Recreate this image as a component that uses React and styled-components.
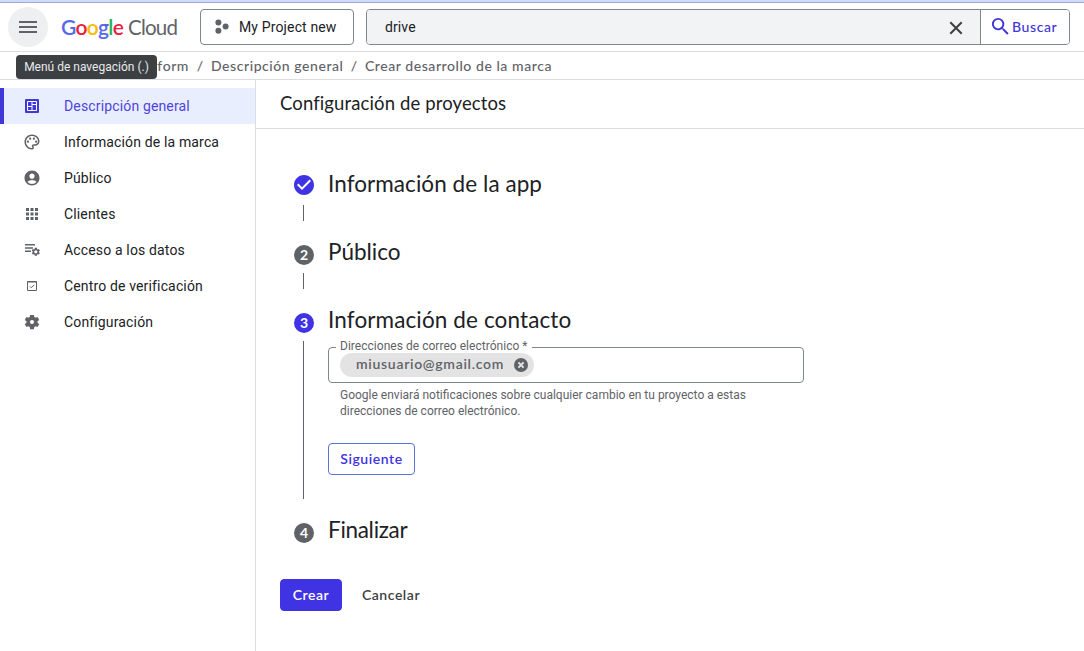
import React from 'react';
import styled, { createGlobalStyle } from 'styled-components';
import {
  MdAccountCircle,
  MdApps,
  MdCheckCircle,
  MdOutlinePalette,
  MdSearch,
} from 'react-icons/md';

const GlobalStyle = createGlobalStyle`
  * { box-sizing: border-box; }
  body {
    margin: 0;
    background: #fff;
    color: #202124;
    font-family: Roboto, "Liberation Sans", sans-serif;
    font-size: 14px;
    overflow: hidden;
  }
  button { font: inherit; cursor: pointer; }
  svg { display: block; flex: none; }
`;

const display = 'Lato, "Open Sans", sans-serif';

const Page = styled.div`
  display: flex;
  flex-direction: column;
  height: 651px;
`;

const TopStrip = styled.div`
  flex: none;
  height: 3px;
  background: #d0dafc;
  border-bottom: 1px solid #9fabd0;
`;

const Header = styled.header`
  flex: none;
  display: flex;
  align-items: center;
  height: 49px;
  padding: 0 14px 0 8px;
  border-bottom: 1px solid #dadce0;
`;

const MenuButton = styled.button`
  position: relative;
  display: flex;
  align-items: center;
  justify-content: center;
  width: 40px;
  height: 40px;
  padding: 0;
  border: 0;
  border-radius: 50%;
  background: #eeeff1;
`;

const Tooltip = styled.span`
  position: absolute;
  z-index: 2;
  top: 48px;
  left: 8px;
  width: 141px;
  height: 24px;
  border-radius: 4px;
  background: #3c4043;
  color: #e8eaed;
  font-size: 12px;
  line-height: 24px;
  text-align: center;
  white-space: nowrap;
`;

const Logo = styled.div`
  display: flex;
  width: 139px;
  padding-left: 13px;
  font-family: ${display};
  font-size: 21px;
  line-height: 26px;
  white-space: nowrap;
`;

const Brand = styled.span`
  width: 67px;
  font-weight: 600;
  letter-spacing: -0.7px;
`;

const Letter = styled.span`
  color: ${(p) => p.$color};
`;

const Product = styled.span`
  color: #5f6368;
  font-size: 20.5px;
  letter-spacing: -0.8px;
`;

const ProjectPicker = styled.button`
  display: flex;
  align-items: center;
  gap: 10px;
  width: 154px;
  height: 36px;
  margin: 0 12px 0 13px;
  padding: 0 0 0 14px;
  border: 1px solid #80868b;
  border-radius: 4px;
  background: #fff;
  color: #202124;
  letter-spacing: 0.14px;
  white-space: nowrap;
`;

const SearchBox = styled.div`
  flex: 1;
  display: flex;
  height: 36px;
  border: 1px solid #80868b;
  border-radius: 4px;
  overflow: hidden;
`;

const SearchField = styled.div`
  flex: 1;
  display: flex;
  align-items: center;
  justify-content: space-between;
  padding: 0 14px 0 18px;
  background: #f1f3f4;
  letter-spacing: 0.1px;
`;

const SearchButton = styled.button`
  display: flex;
  align-items: center;
  width: 89px;
  padding: 0 0 2px 8px;
  border: 0;
  border-left: 1px solid #80868b;
  background: #fff;
  color: #4035d8;
  font-family: ${display};
  font-weight: 500;
  letter-spacing: 0.6px;
`;

const Breadcrumbs = styled.nav`
  flex: none;
  display: flex;
  align-items: center;
  height: 28px;
  padding-left: 36px;
  border-bottom: 1px solid #dadce0;
  color: #5f6368;
  font-family: ${display};
  font-weight: 500;
  white-space: nowrap;
`;

const Crumb = styled.span`
  width: ${(p) => p.$width}px;
  text-align: ${(p) => p.$align || 'left'};
  letter-spacing: 0.56px;
`;

const Slash = styled.span`
  width: 22px;
  text-align: center;
`;

const Body = styled.div`
  flex: 1;
  display: flex;
`;

const Sidebar = styled.aside`
  width: 256px;
  padding-top: 8px;
  border-right: 1px solid #dadce0;
`;

const NavItem = styled.div`
  display: flex;
  align-items: center;
  gap: 23px;
  height: 36px;
  padding-left: 19px;
  border-left: 4px solid ${(p) => (p.$active ? '#4038d8' : 'transparent')};
  background: ${(p) => (p.$active ? '#e8eefe' : 'transparent')};
  color: ${(p) => (p.$active ? '#4f45dc' : '#202124')};
  letter-spacing: 0.15px;

  svg {
    color: ${(p) => (p.$active ? '#4038d8' : '#5f6368')};
  }
`;

const Main = styled.main`
  flex: 1;
`;

const PageTitle = styled.h1`
  height: 49px;
  margin: 0;
  padding-left: 24px;
  border-bottom: 1px solid #dadce0;
  font-family: ${display};
  font-size: 18.5px;
  font-weight: 400;
  letter-spacing: 0.12px;
  line-height: 46px;
`;

const Steps = styled.div`
  display: flex;
  flex-direction: column;
  gap: 12px;
  padding: 36px 0 0 38px;
`;

const StepHeader = styled.div`
  display: flex;
  align-items: center;
  gap: 14px;
  height: 40px;
`;

const StepMark = styled.span`
  display: flex;
  align-items: center;
  justify-content: center;
  width: 20px;
  height: 20px;
  margin-top: ${(p) => (p.$done ? 0 : 4)}px;
  border-radius: 50%;
  background: ${(p) => (p.$done ? 'none' : p.$active ? '#4033e3' : '#5f6368')};
  color: ${(p) => (p.$done ? '#4033e3' : '#fff')};
  font-family: ${display};
  font-size: 14px;
  font-weight: 700;
  line-height: 20px;
`;

const StepTitle = styled.h2`
  margin: 0 0 2px;
  font-family: ${display};
  font-size: 22.5px;
  font-weight: 400;
  letter-spacing: ${(p) => p.$spacing || 0}px;
  line-height: 28px;
`;

const StepBody = styled.div`
  min-height: 16px;
  margin-left: 9px;
  padding-left: 24px;
  border-left: 1px solid #5f6368;
`;

const ContactForm = styled.div`
  height: 158px;
  padding-top: 6px;
`;

const EmailField = styled.div`
  position: relative;
  display: flex;
  align-items: center;
  width: 476px;
  height: 36px;
  padding-left: 11px;
  border: 1px solid #80868b;
  border-radius: 4px;
`;

const FieldLabel = styled.label`
  position: absolute;
  top: -10px;
  left: 7px;
  width: 196px;
  padding-left: 4px;
  background: #fff;
  color: #5f6368;
  font-size: 12px;
  letter-spacing: 0.03px;
  line-height: 16px;
  white-space: nowrap;
`;

const Chip = styled.span`
  position: relative;
  display: flex;
  align-items: center;
  justify-content: space-between;
  width: 194px;
  height: 24px;
  padding: 0 5px 0 16px;
  border-radius: 12px;
  background: #e3e3e3;
  color: #5f6368;
  font-family: ${display};
  font-weight: 600;
  letter-spacing: 0.7px;
  line-height: 20px;
`;

const ChipText = styled.span`
  padding-bottom: 2px;
`;

const Hint = styled.p`
  width: 430px;
  margin: 4px 0 24px;
  padding-left: 12px;
  color: #5f6368;
  font-size: 12px;
  line-height: 16px;
`;

const Button = styled.button`
  width: ${(p) => p.$width}px;
  height: 32px;
  padding: 0 0 2px;
  border: 1px solid ${(p) => (p.$primary ? '#4033e3' : p.$outlined ? '#5b72d8' : 'transparent')};
  border-radius: 4px;
  background: ${(p) => (p.$primary ? '#4033e3' : 'transparent')};
  color: ${(p) => (p.$primary ? '#fff' : p.$outlined ? '#4033e3' : '#3c4043')};
  font-family: ${display};
  font-weight: 600;
  letter-spacing: 0.55px;
`;

const Actions = styled.div`
  display: flex;
  gap: 8px;
  padding: 28px 0 0 24px;
`;

const MenuIcon = () => (
  <svg width="18" height="14" viewBox="0 0 18 14" fill="#5f6368">
    <path d="M0 1h18v2H0zM0 6h18v2H0zM0 11h18v2H0z" />
  </svg>
);

const ProjectIcon = () => (
  <svg width="14" height="16" viewBox="0 0 14 16" fill="#5f6368">
    <circle cx="3.4" cy="3.4" r="3" />
    <circle cx="10.6" cy="7.6" r="3" />
    <circle cx="3.4" cy="11.8" r="3" />
  </svg>
);

const ClearIcon = () => (
  <svg width="20" height="20" viewBox="0 0 20 20" fill="none" stroke="#3c4043" strokeWidth="2">
    <path d="M4.3 5.3l11.4 11.4M15.7 5.3L4.3 16.7" />
  </svg>
);

const RemoveIcon = () => (
  <svg width="16" height="16" viewBox="0 0 16 16">
    <circle cx="8" cy="8" r="7" fill="currentColor" />
    <path d="M5.4 5.4l5.2 5.2M10.6 5.4l-5.2 5.2" stroke="#e3e3e3" strokeWidth="2" />
  </svg>
);

const OverviewIcon = () => (
  <svg width="18" height="18" viewBox="0 0 18 18">
    <rect x="2" y="2" width="14" height="14" rx="1" fill="currentColor" />
    <path
      d="M4.5 4.5h9v9h-9zM9 4.5v9M4.5 9.5H9M9 7.5h4.5"
      fill="none"
      stroke="#fff"
    />
  </svg>
);

const DataIcon = () => (
  <svg width="18" height="18" viewBox="0 0 18 18" fill="currentColor">
    <path d="M2 3h10v1.5H2zM2 6.2h8v1.5H2zM2 9.4h6v1.5H2z" />
    <g transform="translate(7.8 5.8) scale(.42)" fillRule="evenodd">
      <path d="M19.4 13a7.5 7.5 0 0 0 0-2l2.2-1.7-2.2-3.8-2.6 1a7.7 7.7 0 0 0-1.8-1L14.6 2.5H9.4L9 5.5a7.7 7.7 0 0 0-1.8 1l-2.6-1-2.2 3.8L4.6 11a7.5 7.5 0 0 0 0 2l-2.2 1.7 2.2 3.8 2.6-1a7.7 7.7 0 0 0 1.8 1l.4 3h5.2l.4-3a7.7 7.7 0 0 0 1.8-1l2.6 1 2.2-3.8zM12 15.8a3.8 3.8 0 1 1 0-7.6 3.8 3.8 0 0 1 0 7.6z" />
    </g>
  </svg>
);

const VerifyIcon = () => (
  <svg width="18" height="18" viewBox="0 0 18 18" fill="none" stroke="currentColor">
    <path d="M4.5 4.5h9v9h-9z" />
    <path d="M4 5h10" />
    <path d="M6.8 9.3l1.5 1.5 2.9-2.9" />
  </svg>
);

const GearIcon = () => (
  <svg width="18" height="18" viewBox="0 0 24 24" fill="currentColor" fillRule="evenodd">
    <path d="M19.4 13a7.5 7.5 0 0 0 0-2l2.2-1.7-2.2-4-2.8 1.1a7.7 7.7 0 0 0-1.6-1L14.6 2.5H9.4L9 5.4a7.7 7.7 0 0 0-1.6 1L4.6 5.3l-2.2 4L4.6 11a7.5 7.5 0 0 0 0 2l-2.2 1.7 2.2 4 2.8-1.1a7.7 7.7 0 0 0 1.6 1l.4 2.9h5.2l.4-2.9a7.7 7.7 0 0 0 1.6-1l2.8 1.1 2.2-4zM12 14.7a2.7 2.7 0 1 1 0-5.4 2.7 2.7 0 0 1 0 5.4z" />
  </svg>
);

const navItems = [
  { label: 'Descripción general', Icon: OverviewIcon, active: true },
  { label: 'Información de la marca', Icon: MdOutlinePalette },
  { label: 'Público', Icon: MdAccountCircle },
  { label: 'Clientes', Icon: MdApps },
  { label: 'Acceso a los datos', Icon: DataIcon },
  { label: 'Centro de verificación', Icon: VerifyIcon },
  { label: 'Configuración', Icon: GearIcon },
];

const logoLetters = [
  ['G', '#5468ee'],
  ['o', '#ee1c3a'],
  ['o', '#fbbc04'],
  ['g', '#5468ee'],
  ['l', '#22b455'],
  ['e', '#ee1c3a'],
];

const Step = ({ number, title, spacing, done, active, last, children }) => (
  <div>
    <StepHeader>
      <StepMark $done={done} $active={active}>
        {done ? <MdCheckCircle size={24} /> : number}
      </StepMark>
      <StepTitle $spacing={spacing}>{title}</StepTitle>
    </StepHeader>
    {!last && <StepBody>{children}</StepBody>}
  </div>
);

const App = () => {
  return (
    <Page>
      <GlobalStyle />
      <TopStrip />
      <Header>
        <MenuButton>
          <MenuIcon />
          <Tooltip>Menú de navegación (.)</Tooltip>
        </MenuButton>
        <Logo>
          <Brand>
            {logoLetters.map(([letter, color], i) => (
              <Letter key={i} $color={color}>{letter}</Letter>
            ))}
          </Brand>
          <Product>Cloud</Product>
        </Logo>
        <ProjectPicker>
          <ProjectIcon />
          My Project new
        </ProjectPicker>
        <SearchBox>
          <SearchField>
            drive
            <ClearIcon />
          </SearchField>
          <SearchButton>
            <MdSearch size={23} />
            Buscar
          </SearchButton>
        </SearchBox>
      </Header>

      <Breadcrumbs>
        <Crumb $width={153} $align="right">Google Cloud Platform</Crumb>
        <Slash>/</Slash>
        <Crumb $width={132}>Descripción general</Crumb>
        <Slash>/</Slash>
        <Crumb $width={190}>Crear desarrollo de la marca</Crumb>
      </Breadcrumbs>

      <Body>
        <Sidebar>
          {navItems.map(({ label, Icon, active }) => (
            <NavItem key={label} $active={active}>
              <Icon size={18} />
              {label}
            </NavItem>
          ))}
        </Sidebar>

        <Main>
          <PageTitle>Configuración de proyectos</PageTitle>
          <Steps>
            <Step done title="Información de la app" spacing={0.06} />
            <Step number={2} title="Público" />
            <Step number={3} active title="Información de contacto" spacing={0.12}>
              <ContactForm>
                <EmailField>
                  <FieldLabel>Direcciones de correo electrónico *</FieldLabel>
                  <Chip>
                    <ChipText>miusuario@gmail.com</ChipText>
                    <RemoveIcon />
                  </Chip>
                </EmailField>
                <Hint>
                  Google enviará notificaciones sobre cualquier cambio en tu proyecto a estas
                  direcciones de correo electrónico.
                </Hint>
                <Button $outlined $width={87}>Siguiente</Button>
              </ContactForm>
            </Step>
            <Step number={4} title="Finalizar" spacing={-0.3} last />
          </Steps>
          <Actions>
            <Button $primary $width={62}>Crear</Button>
            <Button $width={82}>Cancelar</Button>
          </Actions>
        </Main>
      </Body>
    </Page>
  );
};

export default App;
